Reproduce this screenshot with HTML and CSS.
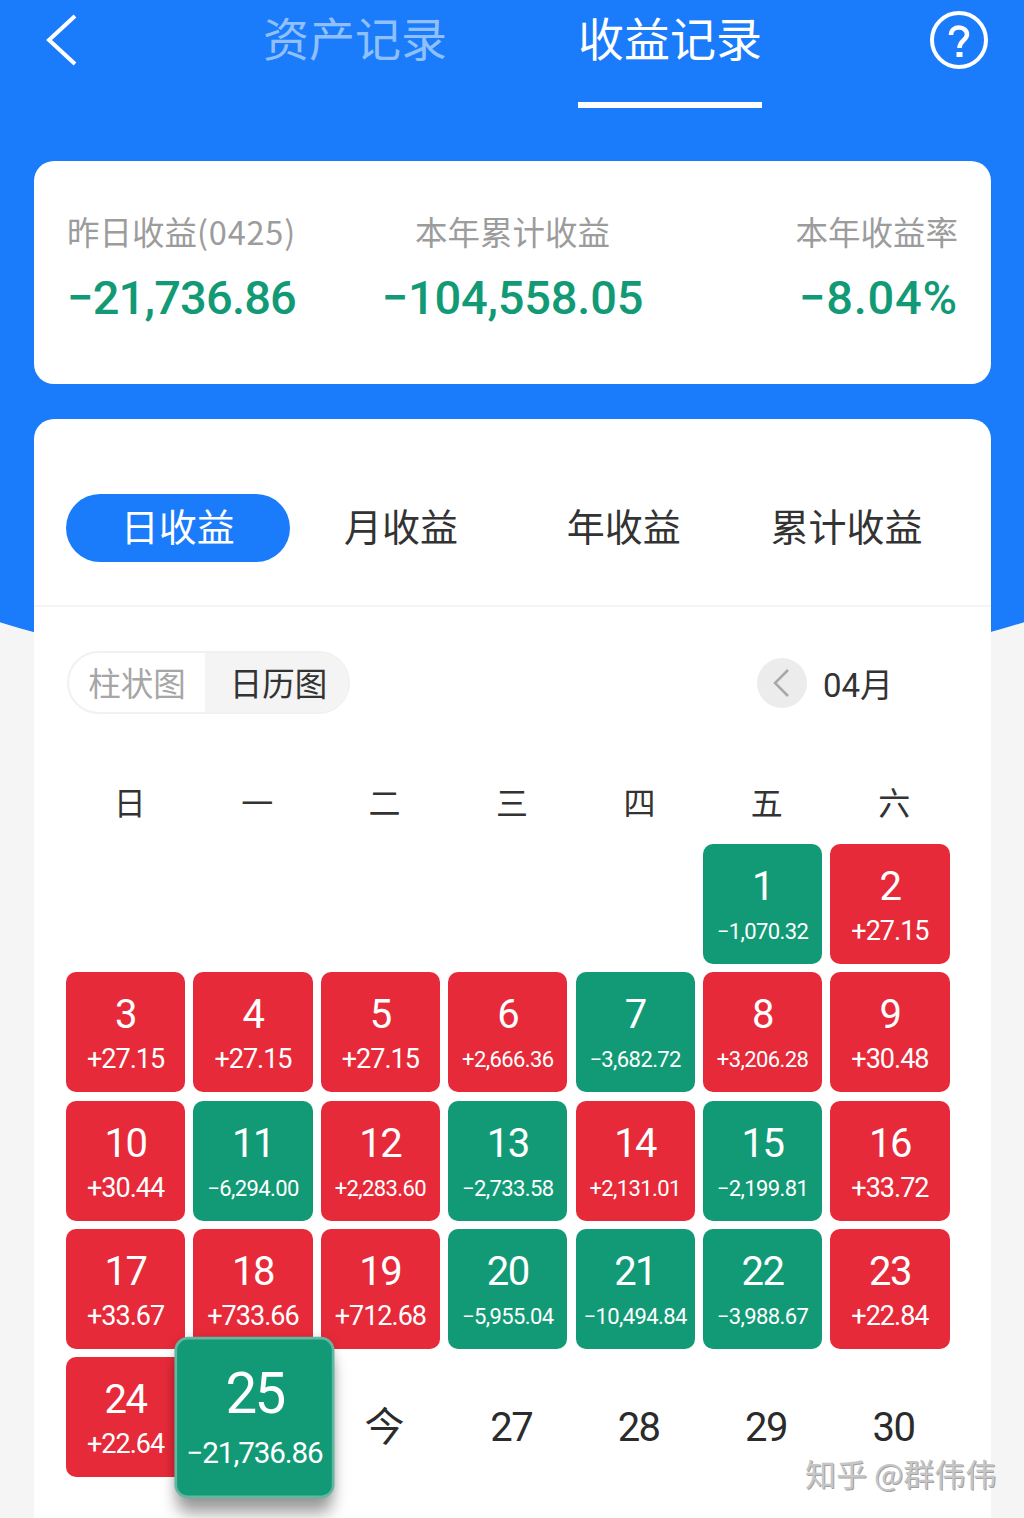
FILE: index.html
```html
<!DOCTYPE html>
<html lang="zh">

<head>
    <meta charset="UTF-8">
    <meta name="viewport" content="width=device-width, initial-scale=1.0">
    <title>收益记录</title>
    <link rel="stylesheet" href="styles.css">
</head>

<body>
    <div class="page">
        <header class="topbar">
            <svg class="back-icon" viewBox="0 0 32 52" width="32" height="52" fill="none" stroke="#fff" stroke-width="4">
                <path d="M29 2 L3 26 L29 50" />
            </svg>
            <div class="top-tab top-tab-muted">资产记录</div>
            <div class="top-tab top-tab-active">收益记录</div>
            <svg class="help-icon" viewBox="0 0 60 60" width="60" height="60" fill="none" stroke="#fff">
                <circle cx="30" cy="29" r="27" stroke-width="4" />
                <path d="M22 24 C22 19 25.500 16.500 30 16.500 C34.500 16.500 38 19.500 38 23.500 C38 29 30.500 29.500 30.500 37" stroke-width="4.500" />
                <rect x="27.500" y="41" width="6" height="5" fill="#fff" stroke="none" />
            </svg>
        </header>

        <section class="summary">
            <div class="summary-item">
                <div class="summary-label">昨日收益<span class="label-date">(0425)</span></div>
                <div class="summary-value">−21,736.86</div>
            </div>
            <div class="summary-item summary-center">
                <div class="summary-label">本年累计收益</div>
                <div class="summary-value">−104,558.05</div>
            </div>
            <div class="summary-item summary-right">
                <div class="summary-label">本年收益率</div>
                <div class="summary-value">−8.04%</div>
            </div>
        </section>

        <section class="panel">
            <div class="period-tabs">
                <div class="period-tab period-active">日收益</div>
                <div class="period-tab">月收益</div>
                <div class="period-tab">年收益</div>
                <div class="period-tab">累计收益</div>
            </div>

            <div class="panel-body">
                <div class="toolbar">
                    <div class="view-switch">
                        <div class="view-option">柱状图</div>
                        <div class="view-option view-active">日历图</div>
                    </div>
                    <div class="month">
                        <div class="month-prev">
                            <svg viewBox="0 0 20 30" width="20" height="30" fill="none" stroke="#a8a8a8" stroke-width="2.500">
                                <path d="M16 2 L3 15 L16 28" />
                            </svg>
                        </div>
                        <span>04月</span>
                    </div>
                </div>

                <div class="weekdays">
                    <div>日</div>
                    <div>一</div>
                    <div>二</div>
                    <div>三</div>
                    <div>四</div>
                    <div>五</div>
                    <div>六</div>
                </div>

                <div class="calendar">
                    <div class="day day-empty"></div>
                    <div class="day day-empty"></div>
                    <div class="day day-empty"></div>
                    <div class="day day-empty"></div>
                    <div class="day day-empty"></div>
                    <div class="day loss"><b>1</b><i class="small">−1,070.32</i></div>
                    <div class="day gain"><b>2</b><i>+27.15</i></div>

                    <div class="day gain"><b>3</b><i>+27.15</i></div>
                    <div class="day gain"><b>4</b><i>+27.15</i></div>
                    <div class="day gain"><b>5</b><i>+27.15</i></div>
                    <div class="day gain"><b>6</b><i class="small">+2,666.36</i></div>
                    <div class="day loss"><b>7</b><i class="small">−3,682.72</i></div>
                    <div class="day gain"><b>8</b><i class="small">+3,206.28</i></div>
                    <div class="day gain"><b>9</b><i>+30.48</i></div>

                    <div class="day gain"><b>10</b><i>+30.44</i></div>
                    <div class="day loss"><b>11</b><i class="small">−6,294.00</i></div>
                    <div class="day gain"><b>12</b><i class="small">+2,283.60</i></div>
                    <div class="day loss"><b>13</b><i class="small">−2,733.58</i></div>
                    <div class="day gain"><b>14</b><i class="small">+2,131.01</i></div>
                    <div class="day loss"><b>15</b><i class="small">−2,199.81</i></div>
                    <div class="day gain"><b>16</b><i>+33.72</i></div>

                    <div class="day gain"><b>17</b><i>+33.67</i></div>
                    <div class="day gain"><b>18</b><i>+733.66</i></div>
                    <div class="day gain"><b>19</b><i>+712.68</i></div>
                    <div class="day loss"><b>20</b><i class="small">−5,955.04</i></div>
                    <div class="day loss"><b>21</b><i class="small">−10,494.84</i></div>
                    <div class="day loss"><b>22</b><i class="small">−3,988.67</i></div>
                    <div class="day gain"><b>23</b><i>+22.84</i></div>

                    <div class="day gain"><b>24</b><i>+22.64</i></div>
                    <div class="day loss day-selected"><b>25</b><i class="small">−21,736.86</i></div>
                    <div class="day day-future">今</div>
                    <div class="day day-future">27</div>
                    <div class="day day-future">28</div>
                    <div class="day day-future">29</div>
                    <div class="day day-future">30</div>
                </div>
            </div>
        </section>

        <div class="watermark">知乎 @群伟伟</div>
    </div>
</body>

</html>
```

FILE: styles.css
```css
* {
    margin: 0;
    padding: 0;
    box-sizing: border-box;
}

body {
    font-family: Roboto, 'Noto Sans CJK SC', sans-serif;
    background: #f5f5f5;
}

.page {
    position: relative;
    width: 1024px;
    height: 1518px;
    overflow: hidden;
    padding: 0 33px 0 34px;
}

/* blue curved backdrop */
.page::before {
    content: "";
    position: absolute;
    top: 0;
    left: -100px;
    width: 1224px;
    height: 681px;
    background: #1a7bfb;
    border-radius: 0 0 50% 50% / 0 0 130px 130px;
}

.topbar {
    position: relative;
    display: flex;
    height: 161px;
    align-items: flex-start;
}

.back-icon {
    margin: 14px 0 0 12px;
    flex-shrink: 0;
}

.top-tab {
    width: 184px;
    height: 108px;
    padding-top: 3px;
    text-align: center;
    font-family: 'Noto Sans CJK SC', sans-serif;
    font-size: 46px;
    line-height: 66px;
    color: #fff;
}

.top-tab-muted {
    margin-left: 185px;
    color: #8fc0fb;
}

.top-tab-active {
    margin-left: 131px;
    border-bottom: 6px solid #fff;
}

.help-icon {
    margin: 11px 0 0 167px;
    flex-shrink: 0;
}

.summary {
    position: relative;
    display: grid;
    grid-template-columns: repeat(3, 1fr);
    padding: 48px 33px 56px;
    height: 223px;
    background: #fff;
    border-radius: 20px;
}

.summary-item {
    white-space: nowrap;
}

.summary-center {
    text-align: center;
}

.summary-right {
    text-align: right;
}

.summary-label {
    font-family: 'Noto Sans CJK SC', sans-serif;
    font-size: 32.500px;
    line-height: 44px;
    color: #9c9c9c;
}

.label-date {
    letter-spacing: 0.800px;
}

.summary-value {
    margin-top: 15px;
    font-size: 47px;
    line-height: 60px;
    font-weight: 500;
    letter-spacing: -0.800px;
    color: #129a76;
}

.summary-center .summary-value {
    letter-spacing: -0.200px;
}

.summary-right .summary-value {
    letter-spacing: 0.800px;
}

.panel {
    position: relative;
    margin-top: 35px;
    height: 1099px;
    background: #fff;
    border-radius: 20px 20px 0 0;
}

.period-tabs {
    display: flex;
    padding: 75px 33px 44px 32px;
    border-bottom: 2px solid #f4f4f4;
    height: 188px;
}

.period-tab {
    width: 223px;
    height: 68px;
    text-align: center;
    font-family: 'Noto Sans CJK SC', sans-serif;
    font-size: 38px;
    line-height: 62px;
    color: #333;
    border-radius: 34px;
}

.period-active {
    width: 224px;
    background: #1a7bfb;
    color: #fff;
}

.panel-body {
    padding: 44px 33px 0 32px;
}

.toolbar {
    display: flex;
    justify-content: space-between;
    align-items: center;
}

.view-switch {
    display: flex;
    width: 283px;
    height: 63px;
    margin-left: 1px;
    border: 2px solid #f1f1f1;
    border-radius: 32px;
    overflow: hidden;
    font-family: 'Noto Sans CJK SC', sans-serif;
    font-size: 32.500px;
    line-height: 57px;
}

.view-option {
    width: 136px;
    text-align: center;
    color: #a6a6a6;
}

.view-active {
    flex: 1;
    padding-left: 4px;
    background: #f4f4f4;
    color: #333;
}

.month {
    display: flex;
    align-items: center;
    gap: 16px;
    padding-right: 65px;
    font-size: 33px;
    color: #333;
}

.month-prev {
    display: flex;
    align-items: center;
    justify-content: center;
    width: 50px;
    height: 50px;
    border-radius: 50%;
    background: #ececec;
}

.weekdays {
    display: grid;
    grid-template-columns: repeat(7, 1fr);
    margin-top: 65px;
    text-align: center;
    font-family: 'Noto Sans CJK SC', sans-serif;
    font-size: 32px;
    line-height: 44px;
    color: #333;
}

.calendar {
    display: grid;
    grid-template-columns: repeat(7, 1fr);
    grid-auto-rows: 120px;
    gap: 8.250px;
    width: 883.500px;
    margin-top: 21px;
}

.day {
    display: flex;
    flex-flow: column;
    align-items: center;
    padding-top: 17px;
    border-radius: 10px;
    color: #fff;
}

.day b {
    font-size: 40px;
    line-height: 52px;
    font-weight: 400;
    letter-spacing: -1.500px;
}

.day i {
    font-style: normal;
    font-size: 27px;
    line-height: 36px;
    letter-spacing: -1px;
}

.day i.small {
    margin-top: 1px;
    font-size: 22px;
    letter-spacing: -0.600px;
}

.gain {
    background: #e72a3a;
}

.loss {
    background: #129a76;
}

.day-empty {
    background: none;
}

.day-future {
    padding: 45px 0 0 7px;
    font-size: 40px;
    line-height: 52px;
    letter-spacing: -1.500px;
    color: #2b2b2b;
}

.day-selected {
    position: relative;
    z-index: 2;
    transform: translate(2px, 0.500px) scale(1.345);
    border: 2px solid #63b7a0;
    padding-top: 15px;
    box-shadow: 0 13px 12px -2px rgba(0, 0, 0, 0.38), 0 0 6px rgba(0, 0, 0, 0.1);
}

.day-selected b {
    font-size: 42px;
    letter-spacing: -2px;
}

.day-selected i.small {
    margin-top: 0;
    letter-spacing: -0.800px;
}

.watermark {
    position: absolute;
    left: 805px;
    top: 1451px;
    font-family: 'Noto Sans CJK SC', sans-serif;
    font-size: 31px;
    line-height: 44px;
    color: #c6c6c6;
    text-shadow: 1px 1px 0 #a2a2a2;
    white-space: nowrap;
}
```
